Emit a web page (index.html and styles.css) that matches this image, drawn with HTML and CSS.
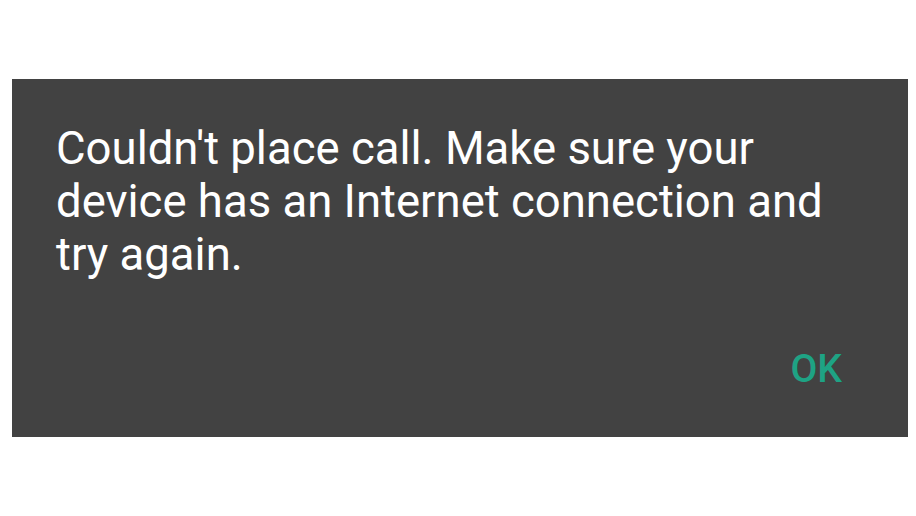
FILE: index.html
```html
<!DOCTYPE html>
<html>
<head>
<meta charset="utf-8">
<link rel="stylesheet" href="styles.css">
</head>
<body>
<div class="page">
  <div class="dialog">
    <p class="message">Couldn't place call. Make sure your device has an Internet connection and try again.</p>
    <div class="actions">
      <span class="ok">OK</span>
    </div>
  </div>
</div>
</body>
</html>
```

FILE: styles.css
```css
html, body {
  margin: 0;
  padding: 0;
  background: #ffffff;
}
.page {
  width: 916px;
  height: 516px;
  padding: 79px 8px 0 12px;
  box-sizing: border-box;
}
.dialog {
  width: 896px;
  height: 358px;
  background: #424242;
  box-sizing: border-box;
  padding: 43px 66px 0 44px;
  display: flex;
  flex-direction: column;
  font-family: Roboto, "Noto Sans", sans-serif;
}
.message {
  margin: 0;
  color: #ffffff;
  font-size: 45.5px;
  line-height: 53px;
  font-weight: 400;
}
.actions {
  display: flex;
  justify-content: flex-end;
  margin-top: 65px;
}
.ok {
  color: #1ea384;
  font-size: 39px;
  font-weight: 500;
  line-height: 46px;
}
```
